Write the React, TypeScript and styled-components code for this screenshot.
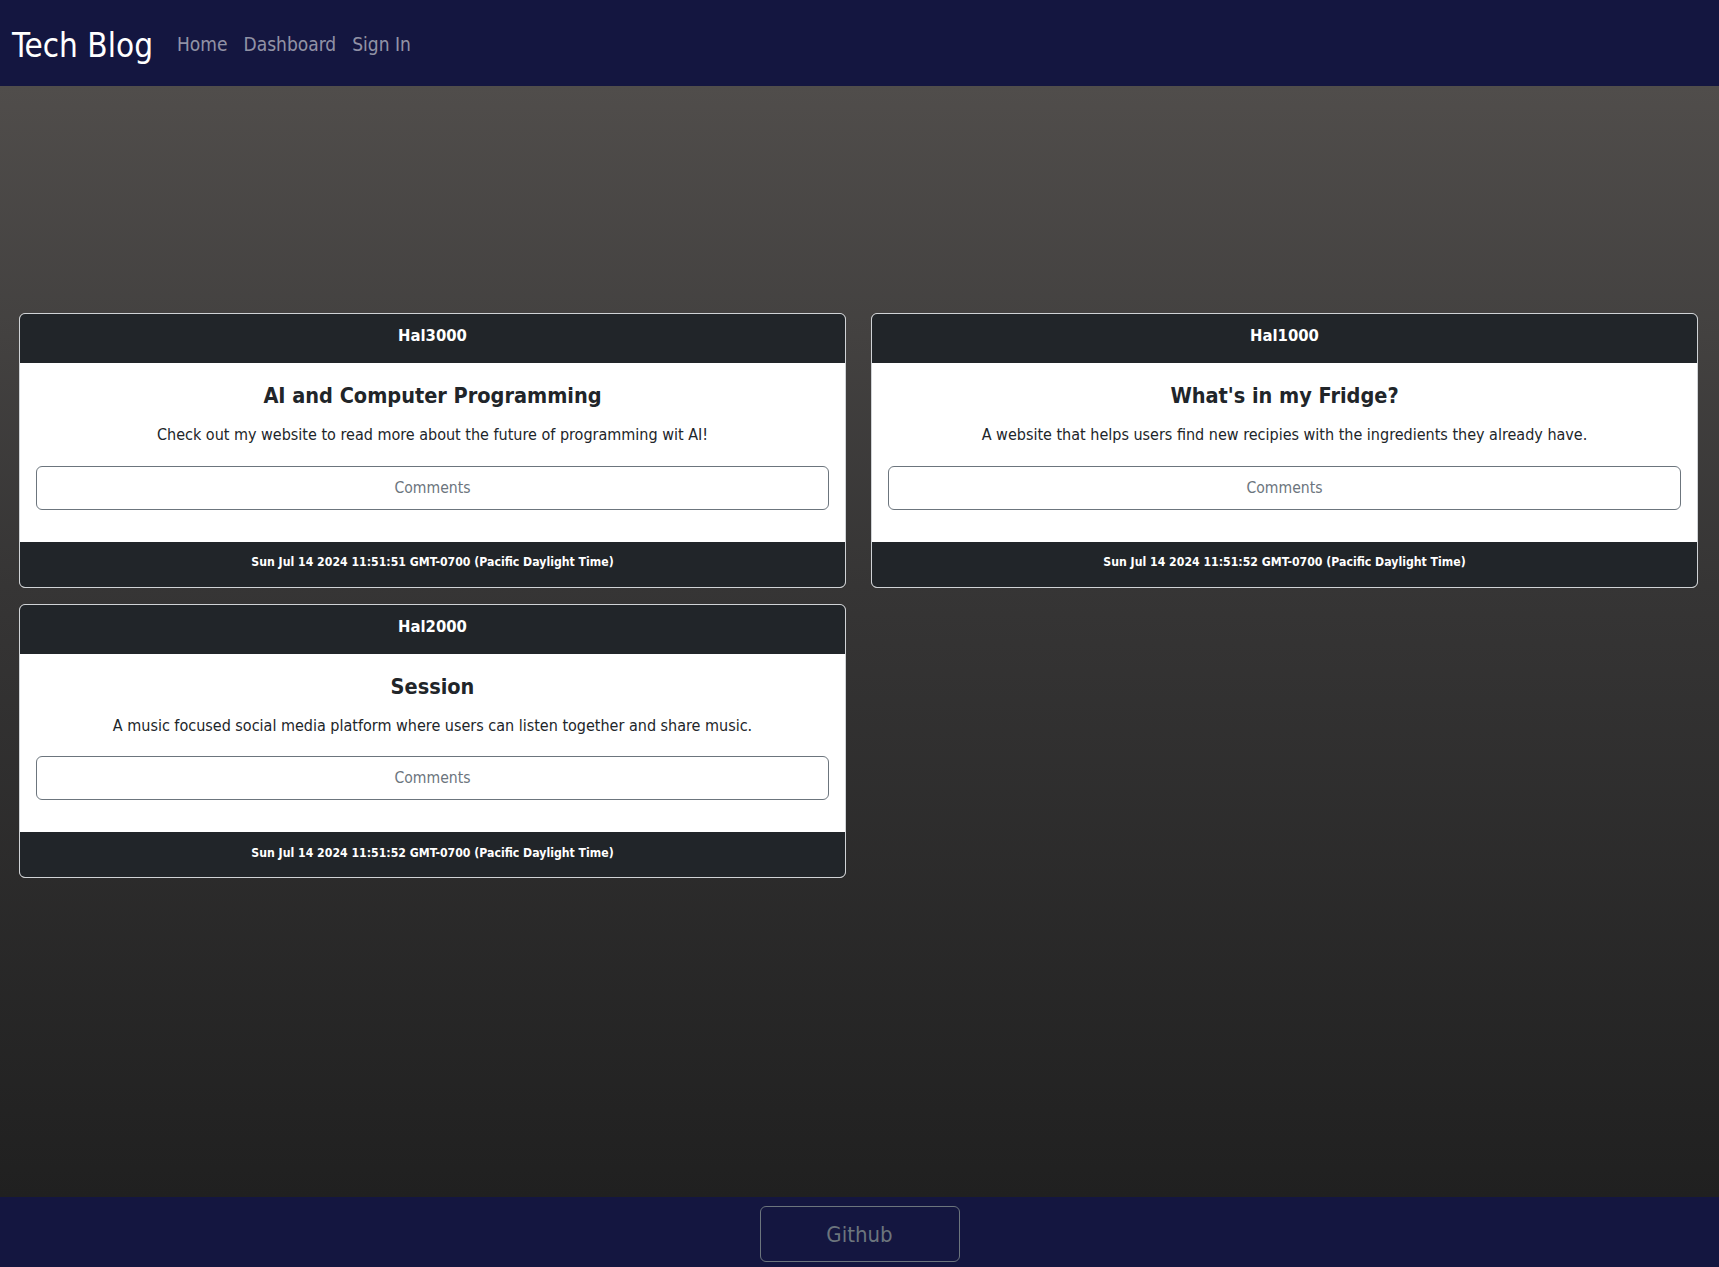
import styled, { createGlobalStyle } from "styled-components";

const GlobalStyle = createGlobalStyle`
  * {
    box-sizing: border-box;
  }
  body {
    margin: 0;
    font-family: "DejaVu Sans Condensed", "Liberation Sans", sans-serif;
    background: #141640;
  }
`;

const Page = styled.div`
  display: flex;
  flex-direction: column;
  min-height: 100vh;
`;

const NavBar = styled.nav`
  display: flex;
  align-items: center;
  height: 86px;
  padding: 0 12px;
  background: #141640;
`;

const Brand = styled.a`
  color: #ffffff;
  font-size: 33px;
  line-height: 1;
  margin-right: 16px;
  padding-top: 4px;
  text-decoration: none;
`;

const NavLinks = styled.div`
  display: flex;
  align-items: center;
`;

const NavLink = styled.a`
  color: rgba(255, 255, 255, 0.55);
  font-size: 19px;
  padding: 2px 8px 0;
  text-decoration: none;
`;

const Main = styled.main`
  flex: 1;
  background: linear-gradient(180deg, #504d4b 0%, #363535 45%, #202020 100%);
  padding: 227px 21px 40px 19px;
`;

const Grid = styled.div`
  display: grid;
  grid-template-columns: 1fr 1fr;
  column-gap: 25px;
  row-gap: 16px;
  align-items: start;
`;

const Card = styled.article`
  display: flex;
  flex-direction: column;
  border: 1px solid #d0d3d6;
  border-radius: 6px;
  overflow: hidden;
  background: #ffffff;
`;

const CardHeader = styled.header`
  display: flex;
  align-items: center;
  justify-content: center;
  height: 49px;
  padding-bottom: 6px;
  background: #212529;
  color: #ffffff;
  font-weight: bold;
  font-size: 16.5px;
`;

const CardBody = styled.div`
  display: flex;
  flex-direction: column;
  align-items: center;
  padding: 16px 16px 32px;
  color: #212529;
`;

const Title = styled.h2`
  margin: 0 0 8px;
  font-size: 21.5px;
  font-weight: bold;
  line-height: 34px;
`;

const Description = styled.p`
  margin: 0 0 16px;
  font-size: 16px;
  line-height: 28.5px;
`;

const OutlineButton = styled.button<{ $size?: number; $height?: number }>`
  display: flex;
  align-items: center;
  justify-content: center;
  height: ${(p) => p.$height ?? 44}px;
  font-family: inherit;
  font-size: ${(p) => p.$size ?? 15.6}px;
  color: #6c757d;
  background: transparent;
  border: 1px solid #6c757d;
  border-radius: 6px;
  cursor: pointer;
`;

const CommentsButton = styled(OutlineButton)`
  width: 100%;
`;

const CardFooter = styled.footer`
  display: flex;
  align-items: center;
  justify-content: center;
  height: 45px;
  padding-bottom: 4px;
  background: #212529;
  color: #ffffff;
  font-weight: bold;
  font-size: 12.2px;
`;

const PageFooter = styled.footer`
  display: flex;
  justify-content: center;
  padding: 9px 0 5px;
  background: #141640;
`;

const GithubButton = styled(OutlineButton)`
  width: 200px;
  padding-top: 2px;
`;

type Post = {
  user: string;
  title: string;
  text: string;
  date: string;
};

const posts: Post[] = [
  {
    user: "Hal3000",
    title: "AI and Computer Programming",
    text: "Check out my website to read more about the future of programming wit AI!",
    date: "Sun Jul 14 2024 11:51:51 GMT-0700 (Pacific Daylight Time)",
  },
  {
    user: "Hal1000",
    title: "What's in my Fridge?",
    text: "A website that helps users find new recipies with the ingredients they already have.",
    date: "Sun Jul 14 2024 11:51:52 GMT-0700 (Pacific Daylight Time)",
  },
  {
    user: "Hal2000",
    title: "Session",
    text: "A music focused social media platform where users can listen together and share music.",
    date: "Sun Jul 14 2024 11:51:52 GMT-0700 (Pacific Daylight Time)",
  },
];

export default function App(): JSX.Element {
  return (
    <Page>
      <GlobalStyle />
      <NavBar>
        <Brand href="#">Tech Blog</Brand>
        <NavLinks>
          <NavLink href="#">Home</NavLink>
          <NavLink href="#">Dashboard</NavLink>
          <NavLink href="#">Sign In</NavLink>
        </NavLinks>
      </NavBar>
      <Main>
        <Grid>
          {posts.map((post) => (
            <Card key={post.user}>
              <CardHeader>{post.user}</CardHeader>
              <CardBody>
                <Title>{post.title}</Title>
                <Description>{post.text}</Description>
                <CommentsButton>Comments</CommentsButton>
              </CardBody>
              <CardFooter>{post.date}</CardFooter>
            </Card>
          ))}
        </Grid>
      </Main>
      <PageFooter>
        <GithubButton $size={22} $height={56}>
          Github
        </GithubButton>
      </PageFooter>
    </Page>
  );
}
